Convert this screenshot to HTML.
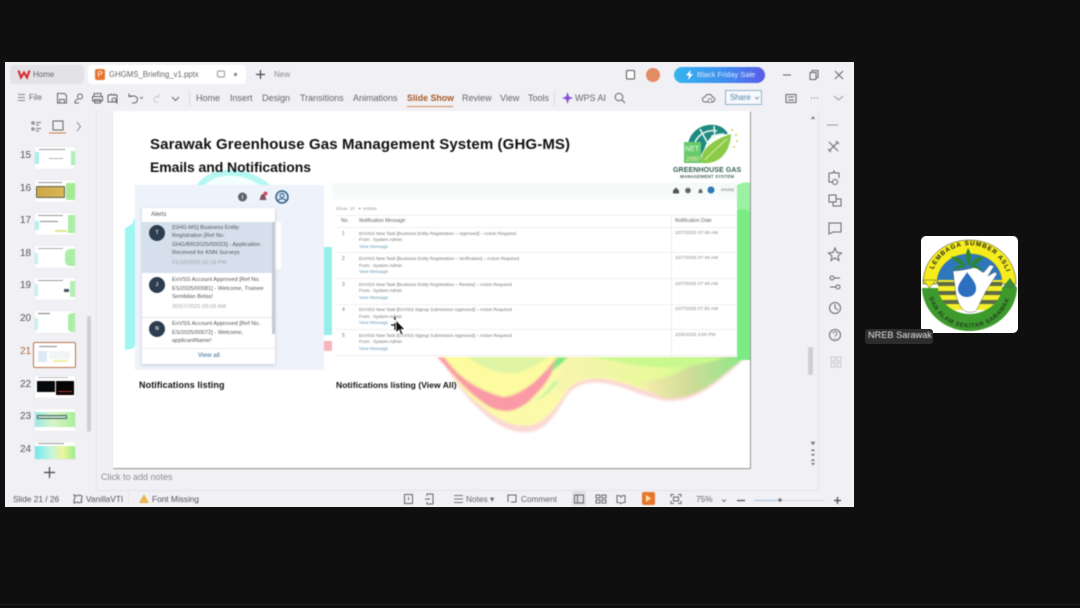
<!DOCTYPE html>
<html><head><meta charset="utf-8"><title>GHG-MS Briefing</title>
<style>
html,body{margin:0;padding:0;width:1080px;height:608px;overflow:hidden;background:#0f0f10}
body{position:relative;font-family:"Liberation Sans",sans-serif;color:#444}
.a,.t{position:absolute}
.t{white-space:nowrap;line-height:1}
.blur{filter:blur(.5px)}
svg{position:absolute;overflow:visible}
.ic{fill:none;stroke:#666;stroke-width:1}
.n{font-size:10px;color:#555;left:20px}
.th{position:absolute;left:35px;width:40px;height:22px;background:#fff;overflow:hidden;box-shadow:0 0 1px #ccc}
.th i{position:absolute;display:block}
.m{font-size:9px;color:#666;top:94px}
.row{font-size:4.500px;color:#777;left:359px}
.lnk{color:#6d9db8}
.d{font-size:4.800px;color:#888;left:675px}
.al{font-size:5.700px;color:#555;left:172px}
.av{position:absolute;left:149px;width:16px;height:16px;border-radius:50%;background:#2d3d50;color:#ddd;font-size:5px;font-weight:bold;line-height:16px;text-align:center}
</style></head><body>
<div class="a" style="left:5px;top:62px;width:849px;height:445px;background:#f1f1f5"></div>
<div class="blur a" style="left:0;top:0;width:1080px;height:608px">
<!-- tabs -->
<div class="a" style="left:10px;top:65px;width:74px;height:19px;background:#e3e3e7;border-radius:4px"></div>
<div class="a" style="left:88px;top:65px;width:158px;height:19px;background:#fff;border-radius:4px"></div>
<svg style="left:18px;top:69px" width="12" height="10" viewBox="0 0 12 10"><path d="M.5 1.500L3 8.500 6 3.500 9 8.500 11.500 1.500" fill="none" stroke="#d8262c" stroke-width="2"/></svg>
<div class="t" style="left:33px;top:71px;font-size:8px;color:#666">Home</div>
<div class="a" style="left:95px;top:69px;width:10px;height:11px;background:#e8742c;border-radius:2px;color:#fff;font-size:8px;line-height:11px;text-align:center">P</div>
<div class="t" style="left:109px;top:71px;font-size:7.800px;color:#666">GHGMS_Briefing_v1.pptx</div>
<svg style="left:217px;top:70px" width="24" height="10"><rect x=".5" y="1" width="7" height="6" rx="1.500" class="ic" stroke-opacity=".7"/><circle cx="18.500" cy="4.500" r="1.600" fill="#888"/></svg>
<svg style="left:255px;top:69px" width="11" height="11"><path d="M5.500 1v9M1 5.500h9" stroke="#444" stroke-width="1.200"/></svg>
<div class="t" style="left:274px;top:71px;font-size:8px;color:#888">New</div>
<svg style="left:626px;top:69px" width="10" height="11"><rect x=".5" y="1.500" width="8" height="8.500" rx="1" fill="#fff" stroke="#555"/></svg>
<div class="a" style="left:646px;top:68px;width:14px;height:14px;border-radius:50%;background:#e58b63;color:#c96;font-size:6px;line-height:14px;text-align:center">w</div>
<div class="a" style="left:674px;top:67px;width:91px;height:16px;border-radius:8px;background:linear-gradient(90deg,#35b4ee,#3f8ff0 55%,#5b5be8)"></div>
<svg style="left:686px;top:70px" width="7" height="10"><path d="M4.500 0L0 5.500h3L2 10l5-6H4z" fill="#fff"/></svg>
<div class="t" style="left:697px;top:71px;font-size:7.500px;color:#dbe9fb">Black Friday Sale</div>
<svg style="left:783px;top:69px" width="62" height="12"><path d="M0 6h8" stroke="#666"/><path d="M27 3.500h6v7h-6zM29 3.500V1.500h6v7h-2" class="ic"/><path d="M52 2l8 8M60 2l-8 8" class="ic"/></svg>

<!-- ribbon -->
<svg style="left:17px;top:93px" width="10" height="10"><path d="M1 1.500h7M1 4.500h7M1 7.500h7" stroke="#888"/></svg>
<div class="t" style="left:29px;top:94px;font-size:8px;color:#666">File</div>
<svg style="left:56px;top:92px" width="130" height="13" viewBox="0 0 130 13"><g class="ic"><path d="M1.500 1.500h7l2 2v7.500h-9zM3.500 11V7.500h5V11"/><circle cx="24" cy="4.500" r="2.500"/><path d="M22 7l-3 2v2h4"/><path d="M38 4.500V1.500h7v3M36.500 4.500h10v4.500h-10zM38.500 7.500h6V11h-6z"/><path d="M52 3h9v7h-9zM55 1.500v2M58 1.500v2"/><circle cx="58" cy="8" r="2"/><path d="M60 10l1.500 1.500"/><path d="M73 4h5a3.500 3.500 0 010 7h-2M73 1.500V4.500h3"/><path d="M84 5l1.500 1.500L87 5" stroke-width=".8"/><path d="M103 4.500h-2a3 3 0 000 6h1M103 2v3h-3" stroke="#ccc"/><path d="M116 5l3.500 3.500L123 5"/></g></svg>
<div class="a" style="left:189px;top:90px;width:1px;height:16px;background:#ddd"></div>
<div class="t m" style="left:196px">Home</div>
<div class="t m" style="left:230px">Insert</div>
<div class="t m" style="left:262px">Design</div>
<div class="t m" style="left:300px">Transitions</div>
<div class="t m" style="left:353px">Animations</div>
<div class="t m" style="left:407px;color:#a85a28;font-weight:bold;font-size:8.800px">Slide Show</div>
<div class="a" style="left:407px;top:106px;width:46px;height:1px;background:#d98a55"></div>
<div class="t m" style="left:462px">Review</div>
<div class="t m" style="left:500px">View</div>
<div class="t m" style="left:528px">Tools</div>
<div class="a" style="left:554px;top:90px;width:1px;height:16px;background:#ddd"></div>
<svg style="left:562px;top:92px" width="11" height="12"><path d="M5.500 0L7 4.500 11 6 7 7.500 5.500 12 4 7.500 0 6 4 4.500z" fill="#8a4fd8"/></svg>
<div class="t m" style="left:575px">WPS AI</div>
<svg style="left:614px;top:92px" width="12" height="12"><circle cx="5" cy="5" r="3.800" class="ic"/><path d="M8 8l3 3" stroke="#666"/></svg>
<svg style="left:702px;top:93px" width="13" height="11"><path d="M3 9a2.500 2.500 0 010-5 4 4 0 017.500 0A2.500 2.500 0 0110 9z" class="ic"/><circle cx="8" cy="7.500" r="2" fill="#f1f1f5" stroke="#666" stroke-width=".7"/></svg>
<div class="a" style="left:725px;top:90px;width:37px;height:15px;border:1px solid #8fb4d0;box-sizing:border-box;background:#f7f8fb"></div>
<div class="t" style="left:730px;top:94px;font-size:7.800px;color:#4e87ad">Share</div>
<svg style="left:754px;top:96px" width="6" height="4"><path d="M1 1l2 2 2-2" fill="none" stroke="#999"/></svg>
<svg style="left:785px;top:92px" width="60" height="12"><path d="M1 2.500h10v8H1zM3 5h6M3 8h6" class="ic"/><path d="M26 6h1M29 6h1M32 6h1" stroke="#666"/><path d="M49 4l4.500 4L58 4" fill="none" stroke="#999"/></svg>

<!-- left pane icons -->
<svg style="left:30px;top:120px" width="55" height="13"><g class="ic"><path d="M2 2h2v2H2zM2 8h2v2H2zM6 2.500h5M6 5h3M6 8.500h5M6 11h3" stroke="#777"/><rect x="23" y="1" width="10" height="9" stroke="#666"/><path d="M47 2l3.500 4.500L47 11" stroke="#888"/></g><path d="M19 13h17" stroke="#d57a45"/></svg>
<div class="t n" style="top:151px">15</div><div class="t n" style="top:184px">16</div><div class="t n" style="top:216px">17</div><div class="t n" style="top:249px">18</div><div class="t n" style="top:281px">19</div><div class="t n" style="top:314px">20</div><div class="t n" style="top:347px;color:#a96a45">21</div><div class="t n" style="top:380px">22</div><div class="t n" style="top:412px">23</div><div class="t n" style="top:445px">24</div>
<div class="th" style="top:147px"><i style="left:0;top:5px;width:4px;height:12px;background:#a9eeea"></i><i style="right:0;top:4px;width:4px;height:14px;background:#aef0b8"></i><i style="left:4px;top:2px;width:26px;height:1px;background:#999"></i><i style="left:14px;top:11px;width:14px;height:1px;background:#bbb"></i></div>
<div class="th" style="top:180px"><i style="right:0;top:3px;width:9px;height:17px;background:#a3eb94"></i><i style="left:1px;top:6px;width:29px;height:12px;background:linear-gradient(90deg,#cfa843,#d9b45a);border:1px solid #55644f;box-sizing:border-box;border-radius:1px"></i><i style="left:3px;top:2px;width:24px;height:1px;background:#999"></i></div>
<div class="th" style="top:213px"><i style="right:0;top:2px;width:7px;height:18px;background:#a9efa5"></i><i style="left:0;top:8px;width:4px;height:9px;background:#b5f0ee"></i><i style="left:3px;top:2px;width:25px;height:1px;background:#999"></i><i style="left:5px;top:8px;width:18px;height:1px;background:#888"></i><i style="left:20px;top:17px;width:12px;height:2px;background:#e5e58e"></i></div>
<div class="th" style="top:246px"><i style="right:0;top:3px;width:10px;height:17px;background:#aaefa7;border-radius:5px 0 0 5px"></i><i style="left:0;top:7px;width:3px;height:11px;background:#c4f2f0"></i><i style="left:3px;top:2px;width:25px;height:1px;background:#aaa"></i></div>
<div class="th" style="top:278px"><i style="right:0;top:3px;width:5px;height:16px;background:#b2efb2"></i><i style="left:0;top:6px;width:3px;height:12px;background:#c4f2f0"></i><i style="left:3px;top:2px;width:25px;height:1px;background:#999"></i><i style="left:29px;top:11px;width:5px;height:3px;background:#456"></i></div>
<div class="th" style="top:311px"><i style="right:0;top:2px;width:7px;height:19px;background:#a9efa5;border-radius:4px 0 0 4px"></i><i style="left:0;top:7px;width:3px;height:12px;background:#c4f2f0"></i><i style="left:3px;top:2px;width:12px;height:1px;background:#777"></i></div>
<div class="a" style="left:33px;top:342px;width:43px;height:26px;border:1.500px solid #b8764a;box-sizing:border-box;border-radius:2px;background:#fff"></div>
<div class="th" style="top:345px;left:36px;width:37px;height:20px;box-shadow:none"><i style="left:2px;top:6px;width:9px;height:11px;background:#dfe8f5"></i><i style="left:13px;top:6px;width:21px;height:8px;background:#f2f5f5"></i><i style="left:3px;top:1px;width:18px;height:1px;background:#888"></i><i style="left:17px;top:15px;width:15px;height:2px;background:#f1eca7"></i></div>
<div class="th" style="top:376px"><i style="left:2px;top:5px;width:18px;height:11px;background:#05090d"></i><i style="left:21px;top:5px;width:18px;height:14px;background:#090404"></i><i style="left:3px;top:1px;width:30px;height:1px;background:#bbb"></i><i style="left:23px;top:15px;width:14px;height:1px;background:#a33"></i></div>
<div class="th" style="top:409px"><i style="left:0;top:3px;width:40px;height:15px;background:linear-gradient(90deg,#9be8e8,#d8f5c8 45%,#a6ef99)"></i><i style="left:2px;top:6px;width:30px;height:4px;background:#bfdcd0;border:1px solid #47635e;box-sizing:border-box"></i></div>
<div class="th" style="top:442px;height:17px"><i style="left:0;top:4px;width:40px;height:13px;background:linear-gradient(90deg,#71e8ee,#c4f4dc 40%,#eef59a 70%,#9bee88)"></i><i style="left:3px;top:1px;width:26px;height:1px;background:#999"></i></div>
<div class="a" style="left:87px;top:316px;width:4px;height:116px;background:#cfcfd3;border-radius:2px"></div>
<svg style="left:44px;top:467px" width="11" height="11"><path d="M5.500 0v11M0 5.500h11" stroke="#444" stroke-width="1.200"/></svg>
<div class="a" style="left:96px;top:111px;width:1px;height:380px;background:#e6e6ea"></div>
<div class="t" style="left:101px;top:473px;font-size:9px;color:#8e8e92">Click to add notes</div>
<div class="a" style="left:96px;top:490px;width:722px;height:1px;background:#e5e5e9"></div>
<div class="a" style="left:818px;top:111px;width:1px;height:380px;background:#e0e0e5"></div>

<!-- right tool icons -->
<svg style="left:807px;top:113px" width="38" height="360" viewBox="0 0 38 360"><g class="ic"><path d="M20 12h11" stroke="#999"/><path d="M22 29l9 9M31 29l-9 9M21 36l3 3M29 28l3 3"/><path d="M22 60h4l1-2 1 2h4v5M22 60v9h4"/><circle cx="28" cy="69" r="2.500"/><path d="M22 82h7v7h-7zM26 89v4h8v-7h-5"/><path d="M22 110h12v9h-8l-4 2z"/><path d="M28 135l2 4.500 4.500.500-3.500 3 1 4.500-4-2.500-4 2.500 1-4.500-3.500-3 4.500-.500z"/><path d="M23 165h10M23 174h10"/><circle cx="25" cy="165" r="2" fill="#f1f1f5"/><circle cx="31" cy="174" r="2" fill="#f1f1f5"/><circle cx="28" cy="195" r="5.500"/><path d="M28 191v4l3 2"/><circle cx="28" cy="222" r="5.500"/><path d="M26 220.500c0-2.500 4-2.500 4 0 0 1.500-2 1.500-2 3M28 225v1" stroke-width=".8"/><g stroke="#c8c8ce"><rect x="24" y="244" width="4" height="4"/><rect x="30" y="244" width="4" height="4"/><rect x="24" y="250" width="4" height="4"/><rect x="30" y="250" width="4" height="4"/></g></g>
<path d="M4 6l2-3 2 3z" fill="#777"/><path d="M4 329l2 3 2-3zM4 338l2-2 2 2M4 341l2 2 2-2M4 348l2-2 2 2M4 350l2 2 2-2" fill="#777" stroke="#777" stroke-width=".5"/></svg>
<div class="a" style="left:808px;top:347px;width:5px;height:28px;background:#d0d0d4;border-radius:2px"></div>

<!-- status bar -->
<div class="t" style="left:13px;top:495px;font-size:8.300px;color:#555">Slide 21 / 26</div>
<svg style="left:73px;top:494px" width="10" height="10"><path d="M1 1l3 1 2-1 3 1v2l-1 2 1 2-3 1-2-1-3 1V6l1-2z" class="ic"/></svg>
<div class="t" style="left:86px;top:495px;font-size:8.300px;color:#555">VanillaVTI</div>
<div class="a" style="left:128px;top:493px;width:1px;height:12px;background:#ede2e2"></div>
<svg style="left:139px;top:494px" width="10" height="9"><path d="M5 0l5 9H0z" fill="#e9b54c"/></svg>
<div class="t" style="left:152px;top:495px;font-size:8.300px;color:#555">Font Missing</div>
<svg style="left:403px;top:493px" width="34" height="12"><path d="M1.500 1.500h8v9h-8z" class="ic"/><path d="M5.500 4v3" stroke="#666"/><path d="M24 3V1h6v10h-6V9M22 6h5" class="ic"/></svg>
<svg style="left:453px;top:494px" width="11" height="10"><path d="M1 1.500h9M1 5h9M1 8.500h9" stroke="#777"/></svg>
<div class="t" style="left:466px;top:495px;font-size:8.300px;color:#666">Notes ▾</div>
<svg style="left:507px;top:494px" width="11" height="10"><path d="M1 8V1h8v7H4" class="ic"/></svg>
<div class="t" style="left:521px;top:495px;font-size:8.300px;color:#666">Comment</div>
<div class="a" style="left:572px;top:491px;width:14px;height:15px;background:#e1e1e5"></div>
<svg style="left:574px;top:494px" width="58" height="10"><g class="ic"><rect x=".5" y="1" width="9" height="8"/><path d="M3.500 1v8"/><path d="M22 1h4v3h-4zM28 1h4v3h-4zM22 6h4v3h-4zM28 6h4v3h-4z"/><path d="M43 1.500c2 0 3.500 0 4 1.500.5-1.500 2-1.500 4-1.500v7c-2 0-3.500 0-4 1-.5-1-2-1-4-1z"/></g></svg>
<div class="a" style="left:642px;top:492px;width:13px;height:13px;background:#e8772e;border-radius:2px"></div>
<svg style="left:645px;top:495px" width="7" height="7"><path d="M1 0l5 3.500L1 7z" fill="#fde7a8"/></svg>
<svg style="left:671px;top:494px" width="10" height="10"><path d="M0 3V.5h3M7 .5h3V3M10 7v2.500H7M3 9.500H0V7" class="ic"/><rect x="2.500" y="3" width="5" height="4" class="ic"/></svg>
<div class="t" style="left:696px;top:495px;font-size:8.300px;color:#666">75%</div>
<svg style="left:722px;top:497px" width="122" height="7"><path d="M0 3l2 2 2-2" fill="none" stroke="#777" transform="translate(0 -.5)"/><path d="M15 3.500h8" stroke="#555" stroke-width="1.300"/><path d="M32 3.500h24" stroke="#9cc0de" stroke-width="1"/><path d="M56 3.500h47" stroke="#d8d8dc" stroke-width="1"/><circle cx="58" cy="3" r="1.800" fill="#777"/><path d="M112 3.500h7M115.500 0v7" stroke="#444" stroke-width="1.200"/></svg>

<!-- slide -->
<div class="a" style="left:113px;top:111px;width:637px;height:357px;background:#fff;overflow:hidden;box-shadow:1px 1px 0 #999,0 1px 1px #bbb"></div>
<svg style="left:113px;top:111px;width:637px;height:357px;overflow:hidden" viewBox="113 111 637 357">
<defs>
<linearGradient id="g1" x1="0" x2="1"><stop offset="0" stop-color="#f8f4b0"/><stop offset=".55" stop-color="#e6fa98"/><stop offset="1" stop-color="#86f088"/></linearGradient>
<linearGradient id="g2" x1="0" x2="1"><stop offset="0" stop-color="#f7eeaa"/><stop offset=".45" stop-color="#cfdc98"/><stop offset="1" stop-color="#84e884"/></linearGradient>
<filter id="sf"><feGaussianBlur stdDeviation="1"/></filter>
</defs>
<path d="M125 228C135 224 133 220 135 218V346C133 350 128 349 125 350z" fill="#9ff6f3"/>
<path d="M199 187C208 172 240 164 268 187" fill="#f2fffe" stroke="#b5f7f2" stroke-width="6"/>
<path d="M324 247h8v88h-8z" fill="#96eeea"/><path d="M324 341h8v10h-8z" fill="#f6b5bb"/>
<g filter="url(#sf)">
<path d="M437 355C450 372 462 395 480 410 495 425 512 434 530 432 545 430 555 416 564 400 572 386 585 381 603 383 625 386 645 398 667 401 685 402 700 395 715 384 730 372 745 360 751 350V330H437z" fill="#fbd9d4"/>
<path d="M437 355C452 372 462 393 482 406 497 420 515 428 532 425 547 420 556 408 566 392 575 380 590 377 607 379 630 383 650 394 670 396 690 396 705 389 720 377 733 367 745 357 751 350V330H437z" fill="#fbfaa8"/>
<path d="M437 357C452 372 465 392 490 407 505 414 520 413 537 393 546 384 554 372 557 357z" fill="#f99aa6"/>
<path d="M444 357C455 372 470 388 503 397 520 396 540 380 557 357z" fill="#fcfb9f"/>
<path d="M468 357C482 368 497 374 517 373 530 369 541 363 549 357z" fill="#dff4a4"/>
<path d="M533 403C545 397 556 388 562 378L553 382C546 392 540 398 533 403z" fill="#c9f5a6"/>
<path d="M557 357L551 372 562 363 568 357z" fill="#7ce882"/>
<path d="M568 357L560 372 555 396 565 390C578 376 598 375 620 380 640 385 656 395 668 394 680 392 692 388 702 380L751 340V330H568z" fill="url(#g1)"/>
<path d="M640 383C650 392 660 398 670 398 688 398 703 391 718 379 731 369 745 358 751 350L737 347 690 366C675 376 655 380 640 383z" fill="url(#g2)"/>
<path d="M575 357h150c-30 12-70 13-100 6-20-4-35-6-50-6z" fill="#c9f88f"/>
</g>
<path d="M737 185h14v175h-14z" fill="#7beb83"/>
<path d="M737 185c6-3 10-3 14-2v30c-6-5-10-5-14-2z" fill="#9bf0a2"/>
</svg>
<div class="t" style="left:150px;top:137px;font-size:15px;font-weight:bold;color:#111;letter-spacing:.12px">Sarawak Greenhouse Gas Management System (GHG-MS)</div>
<div class="t" style="left:150px;top:160px;font-size:14px;font-weight:bold;color:#111;letter-spacing:-.07px">Emails and Notifications</div>
<!-- ghg logo -->
<svg style="left:680px;top:122px" width="60" height="44" viewBox="0 0 60 44">
<path d="M8 25C8 10 22 1 35 3c7 1 11 5 13 9l-16 1-12 22H8z" fill="#1f8a80"/>
<path d="M14 25C15 14 26 7 37 9M24 32C26 20 31 12 44 12M20 7l12 22M34 4l1 12" stroke="#e6f5f0" stroke-width="1.600" fill="none"/>
<rect x="4" y="20" width="17" height="21" fill="#69c96e"/><text x="5" y="29" font-size="7" fill="#e4ffe0" font-family="Liberation Sans">NET</text><text x="6" y="39" font-size="6" fill="#fff2a5" font-family="Liberation Sans">2050</text>
<path d="M21 41C20 28 32 18 51 12 50 30 40 43 21 41z" fill="#8ccb48"/><path d="M25 38c7-8 13-13 22-21" stroke="#d9efae" fill="none"/>
<g fill="#e3c75a"><circle cx="52" cy="8" r="1"/><circle cx="56" cy="13" r="1"/><circle cx="57" cy="19" r="1"/><circle cx="54" cy="25" r="1"/></g>
</svg>
<div class="t" style="left:673px;top:167px;font-size:7px;font-weight:bold;color:#385f55;letter-spacing:.1px">GREENHOUSE GAS</div>
<div class="t" style="left:680px;top:175px;font-size:4.500px;font-weight:bold;color:#4c6a62;letter-spacing:.1px">MANAGEMENT SYSTEM</div>

<!-- alerts -->
<div class="a" style="left:135px;top:185px;width:189px;height:185px;background:#eef3fb"></div>
<div class="a" style="left:274px;top:222px;width:7px;height:47px;background:#fff"></div>
<div class="a" style="left:142px;top:208px;width:133px;height:156px;background:#fff;box-shadow:0 1px 3px rgba(80,90,110,.3)"></div>
<div class="t" style="left:151px;top:212px;font-size:6px;color:#555">Alerts</div>
<div class="a" style="left:142px;top:222px;width:130px;height:51px;background:#d5e0ec"></div>
<div class="a" style="left:272px;top:222px;width:3px;height:112px;background:#c5cad3"></div>
<div class="av" style="top:225px">T</div>
<div class="t al" style="top:226px">[GHG-MS] Business Entity</div>
<div class="t al" style="top:234px">Registration [Ref No.</div>
<div class="t al" style="top:243px">GHG/BR/2025/00023] - Application</div>
<div class="t al" style="top:251px">Received for KNN Surveys</div>
<div class="t al" style="top:261px;color:#9aa4ae">21/10/2025 02:19 PM</div>
<div class="av" style="top:277px">J</div>
<div class="t al" style="top:278px">EnVSS Account Approved [Ref No.</div>
<div class="t al" style="top:287px">ES/2025/00081] - Welcome, Trainee</div>
<div class="t al" style="top:295px">Sembilan Belas!</div>
<div class="t al" style="top:305px;color:#aaa">30/07/2025 09:09 AM</div>
<div class="a" style="left:142px;top:317px;width:130px;height:1px;background:#e5e5e8"></div>
<div class="av" style="top:321px">N</div>
<div class="t al" style="top:322px">EnVSS Account Approved [Ref No.</div>
<div class="t al" style="top:331px">ES/2025/00072] - Welcome,</div>
<div class="t al" style="top:339px">applicantName!</div>
<div class="a" style="left:142px;top:348px;width:133px;height:1px;background:#eee"></div>
<div class="t" style="left:198px;top:353px;font-size:6px;font-weight:bold;color:#6b93ae">View all</div>
<svg style="left:236px;top:189px" width="56" height="16"><circle cx="6.500" cy="8" r="4.500" fill="#5c6168"/><path d="M6.500 6v4" stroke="#ddd"/><path d="M23 11c2-1 1-6 4-6s2 5 4 6z" fill="#7b5560"/><circle cx="29.500" cy="4.500" r="2" fill="#d54a5f"/><circle cx="46" cy="8" r="6" fill="#dbe7f2" stroke="#2f5f85" stroke-width="1.500"/><circle cx="46" cy="6.500" r="2" fill="none" stroke="#2f5f85"/><path d="M42 12c1-3 7-3 8 0" fill="none" stroke="#2f5f85"/></svg>
<div class="t" style="left:139px;top:381px;font-size:9px;font-weight:bold;color:#111;letter-spacing:.1px">Notifications listing</div>

<!-- table panel -->
<div class="a" style="left:332px;top:185px;width:405px;height:172px;background:#fff"></div>
<div class="a" style="left:332px;top:183px;width:405px;height:17px;background:linear-gradient(180deg,#f3faf8,#f9fcfc)"></div>
<svg style="left:672px;top:186px" width="40" height="9"><path d="M1 4.500l3-3 3 3v3H1z" fill="#555"/><circle cx="16" cy="4.500" r="2.800" fill="#666"/><path d="M26 7c1-1 .5-4 2.500-4s1.500 3 2.500 4z" fill="#666"/><circle cx="39" cy="4" r="3.500" fill="#2c78b5"/></svg>
<div class="t" style="left:721px;top:188px;font-size:4.500px;color:#777">envisa</div>
<div class="t" style="left:336px;top:207px;font-size:4.500px;color:#999">Show &nbsp;10 &nbsp; ▾ &nbsp;entries</div>
<div class="a" style="left:336px;top:215px;width:400px;height:1px;background:#f0f0f0"></div>
<div class="a" style="left:671px;top:215px;width:1px;height:142px;background:#eee"></div>
<div class="t" style="left:341px;top:219px;font-size:5px;color:#666">No.</div>
<div class="t" style="left:359px;top:219px;font-size:5px;color:#666">Notification Message</div>
<div class="t" style="left:675px;top:219px;font-size:5px;color:#666">Notification Date</div>
<div class="a" style="left:336px;top:227px;width:400px;height:1px;background:#eee"></div>
<div class="t" style="left:342px;top:232px;font-size:5px;color:#777">1</div>
<div class="t row" style="top:232px">EnVISS New Task [Business Entity Registration – Approved] – Action Required</div>
<div class="t row" style="top:238px">From : System Admin</div><div class="t row lnk" style="top:245px">View Message</div>
<div class="t d" style="top:232px">10/7/2025 07:49 AM</div>
<div class="a" style="left:336px;top:252px;width:400px;height:1px;background:#f0f0f0"></div>
<div class="t" style="left:342px;top:257px;font-size:5px;color:#777">2</div>
<div class="t row" style="top:257px">EnVISS New Task [Business Entity Registration – Verification] – Action Required</div>
<div class="t row" style="top:264px">From : System Admin</div><div class="t row lnk" style="top:270px">View Message</div>
<div class="t d" style="top:257px">10/7/2025 07:49 AM</div>
<div class="a" style="left:336px;top:278px;width:400px;height:1px;background:#f0f0f0"></div>
<div class="t" style="left:342px;top:283px;font-size:5px;color:#777">3</div>
<div class="t row" style="top:283px">EnVISS New Task [Business Entity Registration – Review] – Action Required</div>
<div class="t row" style="top:289px">From : System Admin</div><div class="t row lnk" style="top:296px">View Message</div>
<div class="t d" style="top:283px">10/7/2025 07:49 AM</div>
<div class="a" style="left:336px;top:304px;width:400px;height:1px;background:#f0f0f0"></div>
<div class="t" style="left:342px;top:308px;font-size:5px;color:#777">4</div>
<div class="t row" style="top:308px">EnVISS New Task [EnVISS Signup Submission Approved] – Action Required</div>
<div class="t row" style="top:315px">From : System Admin</div><div class="t row lnk" style="top:321px">View Message</div>
<div class="t d" style="top:308px">10/7/2025 07:50 AM</div>
<div class="a" style="left:336px;top:329px;width:400px;height:1px;background:#f0f0f0"></div>
<div class="t" style="left:342px;top:334px;font-size:5px;color:#777">5</div>
<div class="t row" style="top:334px">EnVISS New Task [EnVISS Signup Submission Approved] – Action Required</div>
<div class="t row" style="top:340px">From : System Admin</div><div class="t row lnk" style="top:347px">View Message</div>
<div class="t d" style="top:334px">10/6/2025 3:00 PM</div>
<div class="a" style="left:336px;top:355px;width:400px;height:1px;background:#eee"></div>
<div class="t" style="left:336px;top:381px;font-size:8.500px;font-weight:bold;color:#111;letter-spacing:.05px">Notifications listing (View All)</div>
<svg style="left:390px;top:316px" width="18" height="20"><path d="M5 7V14M1 9h8M5 1v3" stroke="#111" stroke-width="1.300"/><path d="M6 4V17l3-3 2 5 2-1-2-4.500h4z" fill="#111" stroke="#fff" stroke-width=".8"/></svg>
</div>

<!-- participant -->
<div class="a" style="left:921px;top:236px;width:97px;height:97px;background:#fff;border-radius:5px"></div>
<svg class="blur" style="left:921px;top:236px" width="97" height="97" viewBox="0 0 97 97">
<path d="M2 48C2 22 23 4 48.500 4S95 22 95 48H81C81 30 67 18 48.500 18S16 30 16 48z" fill="#f5ec1d" stroke="#333" stroke-width=".5"/>
<path d="M16 48C16 30 30 18 48.500 18S81 30 81 48z" fill="#2e77bd"/>
<path d="M81 52l8-10 7 10z" fill="#3e8b37"/><path d="M2 44h13l-6.500 8z" fill="#f5ec1d" stroke="#444" stroke-width=".5"/>
<path d="M17 44h64v30H17z" fill="#f4ee2a"/>
<path d="M17 46h64v4H17zM17 55h64v4H17zM17 64h64v4H17z" fill="#5c6b45"/>
<path d="M1 52h16c1 14 15 26 31.500 26S80 66 81 52h15c-1 24-22 43-47.500 43S2 76 1 52z" fill="#3f9a2e"/>
<path d="M32 35c6 0 17-2 22-4 6 4 8 6 9 5l6-7 4 1-6 10 7-4 2 2-11 17-10 20c-10 4-16-1-20-16z" fill="#fff" stroke="#444" stroke-width=".4"/>
<path d="M46 36c4 6 10 11 9 18-1 5-5 7-9 7-6 0-9-4-9-8 0-6 6-11 9-17z" fill="#2c6fc0"/>
<g fill="#2d8435"><path d="M47 30c-3-6-3-12 0-18 4 6 4 12 0 18zM45 30c-6 0-11-5-15-9 6-1 11 1 15 9zM49 30c6 0 11-5 14-9-6-1-11 1-14 9zM45 31l-14 3c4-4 9-6 14-3zM49 31l13 3c-3-4-8-6-13-3z"/></g>
<defs><path id="ta" d="M10 42A39 39 0 0 1 87 42"/><path id="tb" d="M7 56A42 42 0 0 0 90 56"/></defs>
<text font-size="6.300" font-weight="bold" fill="#222" font-family="Liberation Sans" letter-spacing="1"><textPath href="#ta" startOffset="8%">LEMBAGA SUMBER ASLI</textPath></text>
<text font-size="6" font-weight="bold" fill="#1c3d1b" font-family="Liberation Sans" letter-spacing=".6"><textPath href="#tb" startOffset="5%">DAN ALAM SEKITAR SARAWAK</textPath></text>
</svg>
<div class="a" style="left:865px;top:329px;width:68px;height:15px;background:#2c2c2e;border-radius:3px"></div>
<div class="t blur" style="left:868px;top:331px;font-size:9.200px;color:#e4e4e4">NREB Sarawak</div>
<div class="a" style="left:0;top:604px;width:1080px;height:1px;background:#1d1d1e"></div>
</div>
</body></html>
